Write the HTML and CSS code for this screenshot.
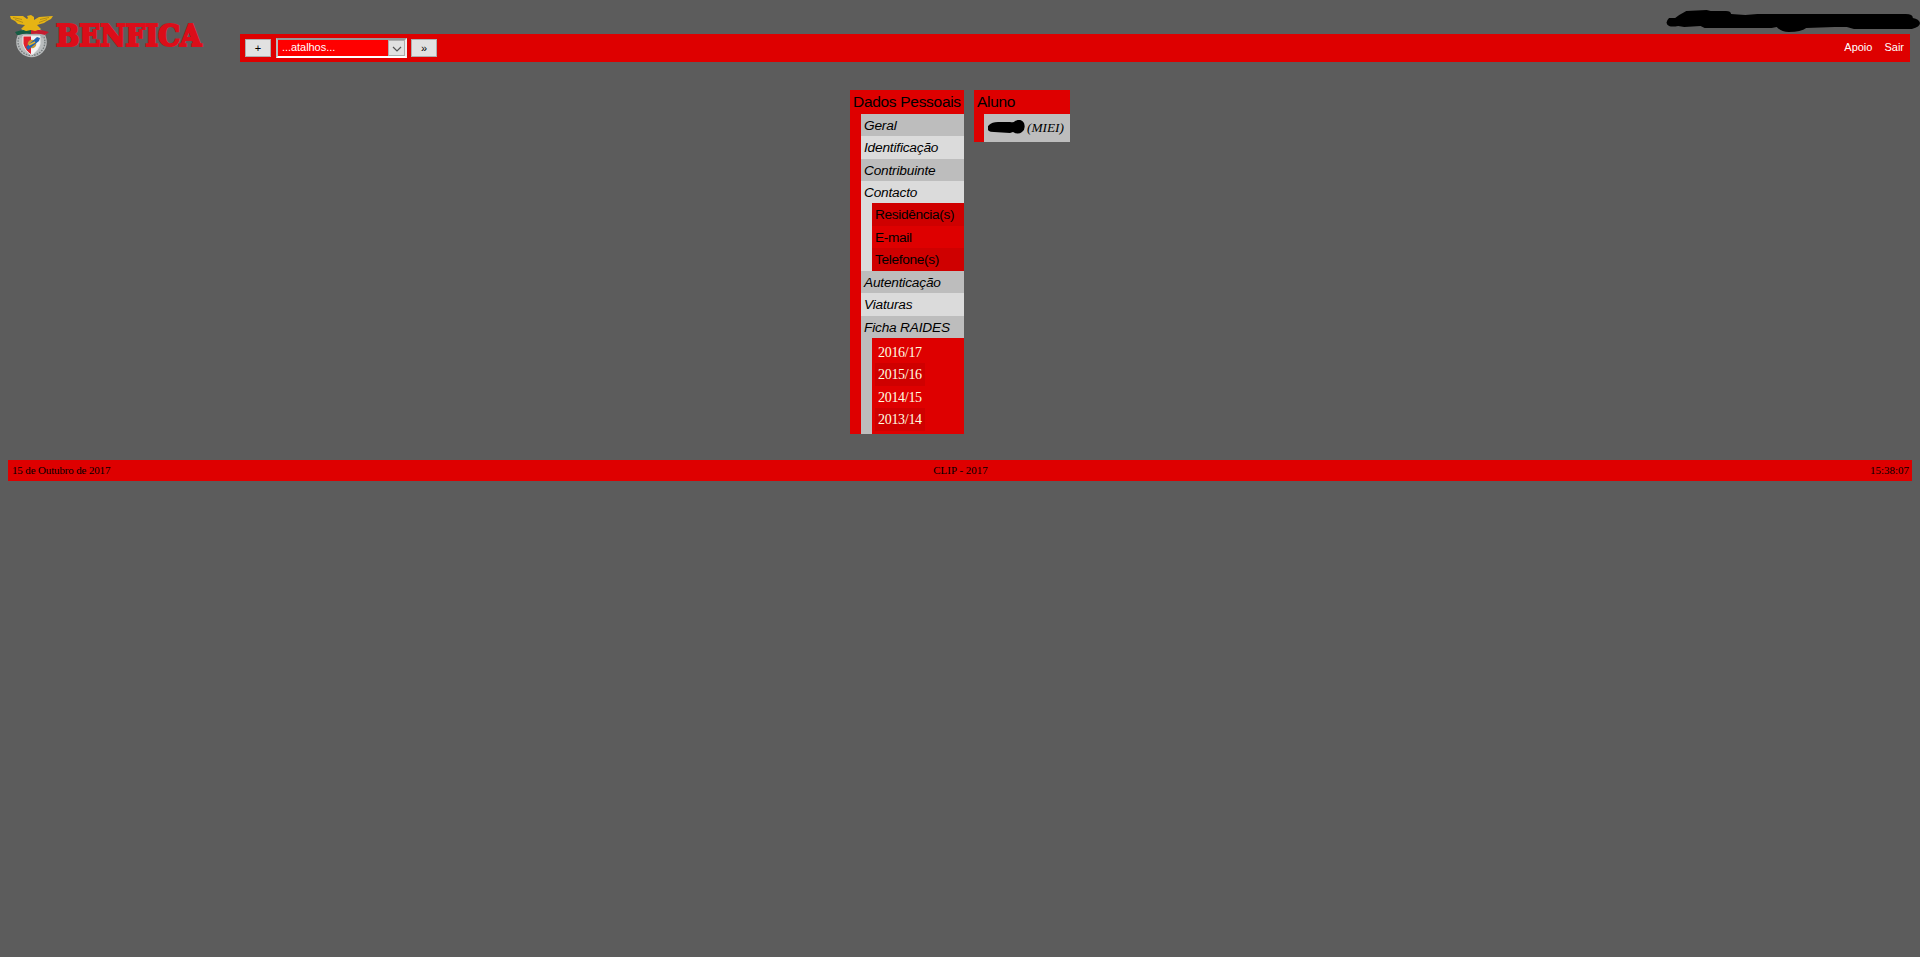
FILE: index.html
```html
<!DOCTYPE html>
<html lang="pt">
<head>
<meta charset="utf-8">
<title>CLIP</title>
<link rel="stylesheet" href="styles.css">
</head>
<body>
<header class="header">
  <svg class="logo" width="232" height="62" viewBox="0 0 232 62" role="img" aria-label="Benfica">
    <circle cx="31.500" cy="42" r="15.300" fill="#b9bcbd"/>
    <circle cx="31.500" cy="42" r="13.400" fill="none" stroke="#777d7e" stroke-width="1.400" stroke-dasharray="1.600 1.200"/>
    <path d="M17 34q5-3 14-2 10-1 15 2l-3 4-12-2-11 2z" fill="#a9adae"/>
    <path d="M23 36h9v19q-7-4-9-11z" fill="#e0202c"/>
    <path d="M31 36h9v8q-2 7-9 11z" fill="#f3f3f3"/>
    <path d="M23 36h17v8q-2 7-8.500 11-6.500-4-8.500-11z" fill="none" stroke="#ececec"/>
    <circle cx="32" cy="44" r="4.300" fill="#c79a35"/>
    <path d="M26 47l11-10 3 1-1 3-11 9z" fill="#2464ad"/>
    <path d="M29 45l6-3" stroke="#e4b52b" stroke-width="1.500"/>
    <path d="M15 32q8-3 16-2v4q-7-1-12 1l-2 0z" fill="#155c43"/>
    <path d="M31 30q9-1 18 2l-4 3q-6-2-14-1z" fill="#c51c30"/>
    <path d="M10 16l13 0 4 3 1-1-1-2 4-1 3 2v3l5-3 14-1-2 3-4 2-3 2-7 2 4 4-6 2-4-1-5 1-5-2 4-4-7-1-3-3-4-2z" fill="#e6b414"/>
    <path d="M13 17.500l9 2m-7 0l8 3m26-5l-9 2m7 0l-8 3" stroke="#9a7a1b" stroke-width=".7" fill="none"/>
    <text class="logo-word" x="56" y="45.800" textLength="145.500" lengthAdjust="spacingAndGlyphs">BENFICA</text>
  </svg>
  <div class="header-main">
    <div class="user">
      <svg width="254" height="28" viewBox="0 0 250 28" preserveAspectRatio="none" aria-hidden="true">
        <path d="M3 12q-5 5 0 8 3 1 9 0l6 1 16-1 4 2h66l5-1q4 5 12 5 12 0 17-4l28-1h12l7 2h57q8-2 8-6-1-4-7-5 0-4-7-4H90l-12 1-14-1q0-3-5-3H44l-4-1-20 1-7 4-4 3z"/>
      </svg>
    </div>
    <nav class="toolbar">
      <button class="btn">+</button>
      <div class="select"><span class="select-value">...atalhos...</span><span class="select-arrow"><svg width="10" height="8" viewBox="0 0 10 8"><path d="M1 3l4 4 4-4" fill="none" stroke="#555" stroke-width="1.200"/></svg></span></div>
      <button class="btn">»</button>
      <div class="links"><a>Apoio</a><a>Sair</a></div>
    </nav>
  </div>
</header>
<main class="panels">
  <section class="panel personal">
    <h2 class="title">Dados Pessoais</h2>
    <div class="items">
      <div class="row dark">Geral</div>
      <div class="row light tall">Identificação</div>
      <div class="row dark">Contribuinte</div>
      <div class="row light">Contacto</div>
      <div class="sub light">
        <div class="subrow odd tall">Residência(s)</div>
        <div class="subrow">E-mail</div>
        <div class="subrow odd tall">Telefone(s)</div>
      </div>
      <div class="row dark">Autenticação</div>
      <div class="row light tall">Viaturas</div>
      <div class="row dark">Ficha RAIDES</div>
      <div class="sub dark">
        <div class="years">
          <a class="year">2016/17</a>
          <a class="year odd tall">2015/16</a>
          <a class="year">2014/15</a>
          <a class="year odd tall">2013/14</a>
        </div>
      </div>
    </div>
  </section>
  <section class="panel student">
    <h2 class="title">Aluno</h2>
    <div class="course">
      <svg width="37" height="14" viewBox="0 0 37 14" aria-hidden="true"><path d="M1 5q3-3 9-3h12q4 1 5-1 6-3 9 2 2 6-2 9-4 3-9 0l-3 1-16-1q-4 0-5-1-3-3 0-6z"/></svg>
      <span>(MIEI)</span>
    </div>
  </section>
</main>
<footer class="footer"><span class="date">15 de Outubro de 2017</span><span>CLIP - 2017</span><span class="time">15:38:07</span></footer>
</body>
</html>
```
FILE: styles.css
```css
* { box-sizing: border-box; }
body { margin: 0; padding: 0 8px; background: #5c5c5c; color: #000; font-family: "Liberation Sans", Arial, sans-serif; }
.header { display: flex; height: 62px; }
.logo { flex: none; margin-left: -8px; width: 232px; }
.logo-word { font: bold 29px "DejaVu Serif", serif; fill: #dc0d19; stroke: #dc0d19; stroke-width: 2.2px; }
.header-main { flex: 1; margin-left: 8px; }
.user { height: 34px; display: flex; justify-content: flex-end; padding-top: 6px; margin-right: -8px; }
.toolbar { display: flex; align-items: center; height: 28px; margin-right: 2px; padding: 0 6px 0 5px; background: #de0000; font-size: 11px; }
.btn { width: 26px; height: 18px; padding: 0; border: 1px solid #adadad; background: #e1e1e1; font: 11px "Liberation Sans", Arial, sans-serif; line-height: 14px; color: #000; }
.select { display: flex; width: 131px; height: 20px; margin: 0 4px 0 5px; border: 2px solid; border-color: #999 #eee #fff #bbb; background: #f00; color: #fff; }
.select-value { flex: 1; padding-left: 4px; line-height: 14px; letter-spacing: -.05px; }
.select-arrow { display: flex; align-items: center; justify-content: center; width: 17px; height: 16px; border: 1px solid #adadad; background: #e1e1e1; }
.links { display: flex; gap: 12px; margin-left: auto; padding-bottom: 2px; color: #fff; }
.panels { display: flex; justify-content: center; align-items: flex-start; gap: 10px; padding-top: 28px; }
.panel { background: #de0000; }
.personal { width: 114px; }
.student { width: 96px; }
.title { margin: 0; height: 24px; padding-left: 3px; font-size: 15.5px; font-weight: normal; line-height: 24px; letter-spacing: -.3px; white-space: nowrap; }
.items { margin-left: 11px; }
.row, .subrow { height: 22px; padding-left: 3px; font-size: 13.7px; line-height: 23px; letter-spacing: -.2px; white-space: nowrap; }
.row { font-style: italic; }
.subrow { letter-spacing: -.35px; }
.dark { background: #bdbdbd; }
.light { background: #dbdbdb; }
.sub { padding-left: 11px; }
.subrow { background: #de0000; }
.odd { background: #cf0000; }
.tall { height: 23px; }
.years { background: #de0000; padding: 3px; }
.year { display: block; width: 50px; height: 22px; padding-left: 3px; font: 14px/23px "Liberation Serif", serif; letter-spacing: -.3px; color: #ffffe0; }
.year.tall { height: 23px; }
.course { display: flex; align-items: center; gap: 2px; height: 28px; margin-left: 10px; padding-left: 4px; background: #bdbdbd; font: italic 13.33px "Liberation Serif", serif; }
.course svg { margin-top: -3px; }
.footer { display: grid; grid-template-columns: 1fr auto 1fr; align-items: center; height: 21px; margin-top: 26px; padding: 0 3px 1px 4px; background: #de0000; font: 11px "Liberation Serif", serif; }
.date { letter-spacing: -.15px; }
.time { text-align: right; }
```
